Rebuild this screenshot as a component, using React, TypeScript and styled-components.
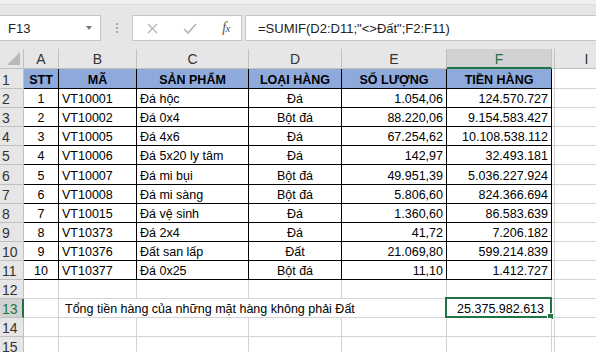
import styled, { createGlobalStyle } from 'styled-components';

const GlobalStyle = createGlobalStyle`
  html, body { margin: 0; padding: 0; overflow: hidden; background: #ffffff; }
  body { font-family: "Liberation Sans", Arial, sans-serif; }
`;

const GREEN = '#217346';
const GRID = '#d4d4d4';

const Page = styled.div`
  width: 596px;
  height: 352px;
  overflow: hidden;
  background: #e6e6e6;
`;

const TitleStrip = styled.div`
  height: 4px;
  background: #f0f0f0;
  border-bottom: 1px solid #dcdcdc;
`;

const FormulaBar = styled.div`
  display: flex;
  align-items: flex-start;
  height: 44px;
  padding-top: 10px;
  box-sizing: border-box;
`;

const Box = styled.div<{ $w?: number; $grow?: boolean }>`
  height: 26px;
  box-sizing: border-box;
  background: #ffffff;
  border: 1px solid #c6c6c6;
  display: flex;
  align-items: center;
  ${(p) => (p.$w ? `width: ${p.$w}px; flex: none;` : '')}
  ${(p) => (p.$grow ? 'flex: 1;' : '')}
`;

const NameBox = styled(Box)`
  margin-left: -1px;
  padding-left: 8px;
  font-size: 13px;
  color: #222;
  position: relative;
`;

const Caret = styled.span`
  position: absolute;
  right: 8px;
  top: 10px;
  width: 0;
  height: 0;
  border-left: 3px solid transparent;
  border-right: 3px solid transparent;
  border-top: 4px solid #777;
`;

const Grip = styled.div`
  width: 31px;
  height: 26px;
  display: flex;
  flex-direction: column;
  justify-content: center;
  align-items: center;
  gap: 2px;
  span {
    width: 2px;
    height: 2px;
    background: #a6a6a6;
  }
`;

const FnBox = styled(Box)`
  justify-content: space-between;
  padding: 0 11px 0 14px;
  margin-right: 3px;
`;

const Fx = styled.span`
  font-family: "Liberation Serif", "DejaVu Serif", serif;
  font-style: italic;
  font-size: 14px;
  color: #555;
  letter-spacing: -0.5px;
  sub {
    font-size: 11px;
    vertical-align: baseline;
  }
`;

const FormulaInput = styled(Box)`
  padding-left: 12px;
  font-size: 13px;
  color: #222;
  margin-right: -10px;
`;

const Sheet = styled.div`
  display: grid;
  grid-template-columns: 24px 35px 78px 112px 93px 105px 105px 3px 64px;
  grid-template-rows: 20px 20px repeat(4, 19px) 20px repeat(9, 19px);
  width: 619px;
  background: #ffffff;
`;

const ColHead = styled.div<{ $sel?: boolean }>`
  box-sizing: border-box;
  background: ${(p) => (p.$sel ? '#d2d2d2' : '#e6e6e6')};
  color: ${(p) => (p.$sel ? GREEN : '#333')};
  border-right: 1px solid #c0c0c0;
  border-bottom: ${(p) => (p.$sel ? `2px solid ${GREEN}` : '1px solid #c0c0c0')};
  font-size: 14px;
  line-height: 14px;
  display: flex;
  align-items: flex-end;
  justify-content: center;
  padding-bottom: ${(p) => (p.$sel ? '1px' : '2px')};
  position: relative;
`;

const Corner = styled(ColHead)`
  svg {
    position: absolute;
    right: 3px;
    bottom: 3px;
  }
`;

const RowHead = styled.div<{ $sel?: boolean }>`
  box-sizing: border-box;
  background: ${(p) => (p.$sel ? '#d2d2d2' : '#e6e6e6')};
  color: ${(p) => (p.$sel ? GREEN : '#333')};
  border-bottom: 1px solid #c0c0c0;
  border-right: ${(p) => (p.$sel ? `2px solid ${GREEN}` : '1px solid #c0c0c0')};
  font-size: 14px;
  line-height: 14px;
  display: flex;
  align-items: flex-end;
  padding-left: 2px;
  padding-bottom: 1px;
`;

type Align = 'left' | 'center' | 'right';

const Cell = styled.div<{ $align?: Align; $bold?: boolean; $fill?: boolean; $table?: boolean; $span?: number; $pl?: number; $pr?: number }>`
  box-sizing: border-box;
  position: relative;
  display: flex;
  align-items: flex-end;
  justify-content: ${(p) => (p.$align === 'center' ? 'center' : p.$align === 'right' ? 'flex-end' : 'flex-start')};
  padding: 0 ${(p) => p.$pr ?? 3}px 0 ${(p) => p.$pl ?? 3}px;
  font-size: 12.5px;
  line-height: 15px;
  font-weight: ${(p) => (p.$bold ? 700 : 400)};
  color: #000;
  white-space: nowrap;
  background: ${(p) => (p.$fill ? '#8eaadb' : '#ffffff')};
  border-right: 1px solid ${(p) => (p.$table ? '#000' : GRID)};
  border-bottom: 1px solid ${(p) => (p.$table ? '#000' : GRID)};
  ${(p) => (p.$span ? `grid-column: span ${p.$span};` : '')}
`;

const Hidden = styled.div`
  box-sizing: border-box;
  border-right: 1px solid ${GRID};
  border-bottom: 1px solid ${GRID};
  background: #ffffff;
`;

const HiddenHead = styled.div`
  box-sizing: border-box;
  background: #e6e6e6;
  border-right: 1px solid #c0c0c0;
  border-bottom: 1px solid #c0c0c0;
`;

const Selection = styled.div`
  position: absolute;
  top: -2px;
  left: -2px;
  right: -1px;
  bottom: -1px;
  border: 2px solid ${GREEN};
  pointer-events: none;
`;

const FillHandle = styled.div`
  position: absolute;
  right: -4px;
  bottom: -4px;
  width: 5px;
  height: 5px;
  background: ${GREEN};
  border: 1px solid #ffffff;
`;

const cols = ['A', 'B', 'C', 'D', 'E', 'F'];
const aligns: Align[] = ['center', 'left', 'left', 'center', 'right', 'right'];
const header = ['STT', 'MÃ', 'SẢN PHẨM', 'LOẠI HÀNG', 'SỐ LƯỢNG', 'TIỀN HÀNG'];

const rows: (string | number)[][] = [
  [1, 'VT10001', 'Đá hộc', 'Đá', '1.054,06', '124.570.727'],
  [2, 'VT10002', 'Đá 0x4', 'Bột đá', '88.220,06', '9.154.583.427'],
  [3, 'VT10005', 'Đá 4x6', 'Đá', '67.254,62', '10.108.538.112'],
  [4, 'VT10006', 'Đá 5x20 ly tâm', 'Đá', '142,97', '32.493.181'],
  [5, 'VT10007', 'Đá mi bụi', 'Bột đá', '49.951,39', '5.036.227.924'],
  [6, 'VT10008', 'Đá mi sàng', 'Bột đá', '5.806,60', '824.366.694'],
  [7, 'VT10015', 'Đá vệ sinh', 'Đá', '1.360,60', '86.583.639'],
  [8, 'VT10373', 'Đá 2x4', 'Đá', '41,72', '7.206.182'],
  [9, 'VT10376', 'Đất san lấp', 'Đất', '21.069,80', '599.214.839'],
  [10, 'VT10377', 'Đá 0x25', 'Bột đá', '11,10', '1.412.727'],
];

const EmptyRow = ({ n }: { n: number }) => (
  <>
    <RowHead>{n}</RowHead>
    {cols.map((c) => (
      <Cell key={c} />
    ))}
    <Hidden />
    <Cell />
  </>
);

const App = () => {
  return (
    <Page>
      <GlobalStyle />
      <TitleStrip />
      <FormulaBar>
        <NameBox $w={102}>
          F13
          <Caret />
        </NameBox>
        <Grip>
          <span />
          <span />
          <span />
        </Grip>
        <FnBox $w={110}>
          <svg width="11" height="11" viewBox="0 0 11 11">
            <path d="M1 1 L10 10 M10 1 L1 10" stroke="#b3b3b3" strokeWidth="1.3" fill="none" />
          </svg>
          <svg width="14" height="11" viewBox="0 0 14 11">
            <path d="M1 6 L5 10 L13 1" stroke="#b3b3b3" strokeWidth="1.6" fill="none" />
          </svg>
          <Fx>
            f<sub>x</sub>
          </Fx>
        </FnBox>
        <FormulaInput $grow>=SUMIF(D2:D11;"&lt;&gt;Đất";F2:F11)</FormulaInput>
      </FormulaBar>

      <Sheet>
        <Corner>
          <svg width="13" height="13" viewBox="0 0 13 13">
            <polygon points="13,0 13,13 0,13" fill="#b9b9b9" />
          </svg>
        </Corner>
        {cols.map((c) => (
          <ColHead key={c} $sel={c === 'F'}>
            {c}
          </ColHead>
        ))}
        <HiddenHead />
        <ColHead>I</ColHead>

        <RowHead>1</RowHead>
        {header.map((h) => (
          <Cell key={h} $align="center" $bold $fill $table>
            {h}
          </Cell>
        ))}
        <Hidden />
        <Cell />

        {rows.map((r, i) => (
          <>
            <RowHead key={`h${i}`}>{i + 2}</RowHead>
            {r.map((v, j) => (
              <Cell key={`${i}-${j}`} $align={aligns[j]} $table>
                {v}
              </Cell>
            ))}
            <Hidden key={`g${i}`} />
            <Cell key={`i${i}`} />
          </>
        ))}

        <EmptyRow n={12} />

        <RowHead $sel>13</RowHead>
        <Cell />
        <Cell $span={4} $pl={6}>
          Tổng tiền hàng của những mặt hàng không phải Đất
        </Cell>
        <Cell $align="right" $pr={7}>
          25.375.982.613
          <Selection>
            <FillHandle />
          </Selection>
        </Cell>
        <Hidden />
        <Cell />

        <EmptyRow n={14} />
        <EmptyRow n={15} />
      </Sheet>
    </Page>
  );
};

export default App;
